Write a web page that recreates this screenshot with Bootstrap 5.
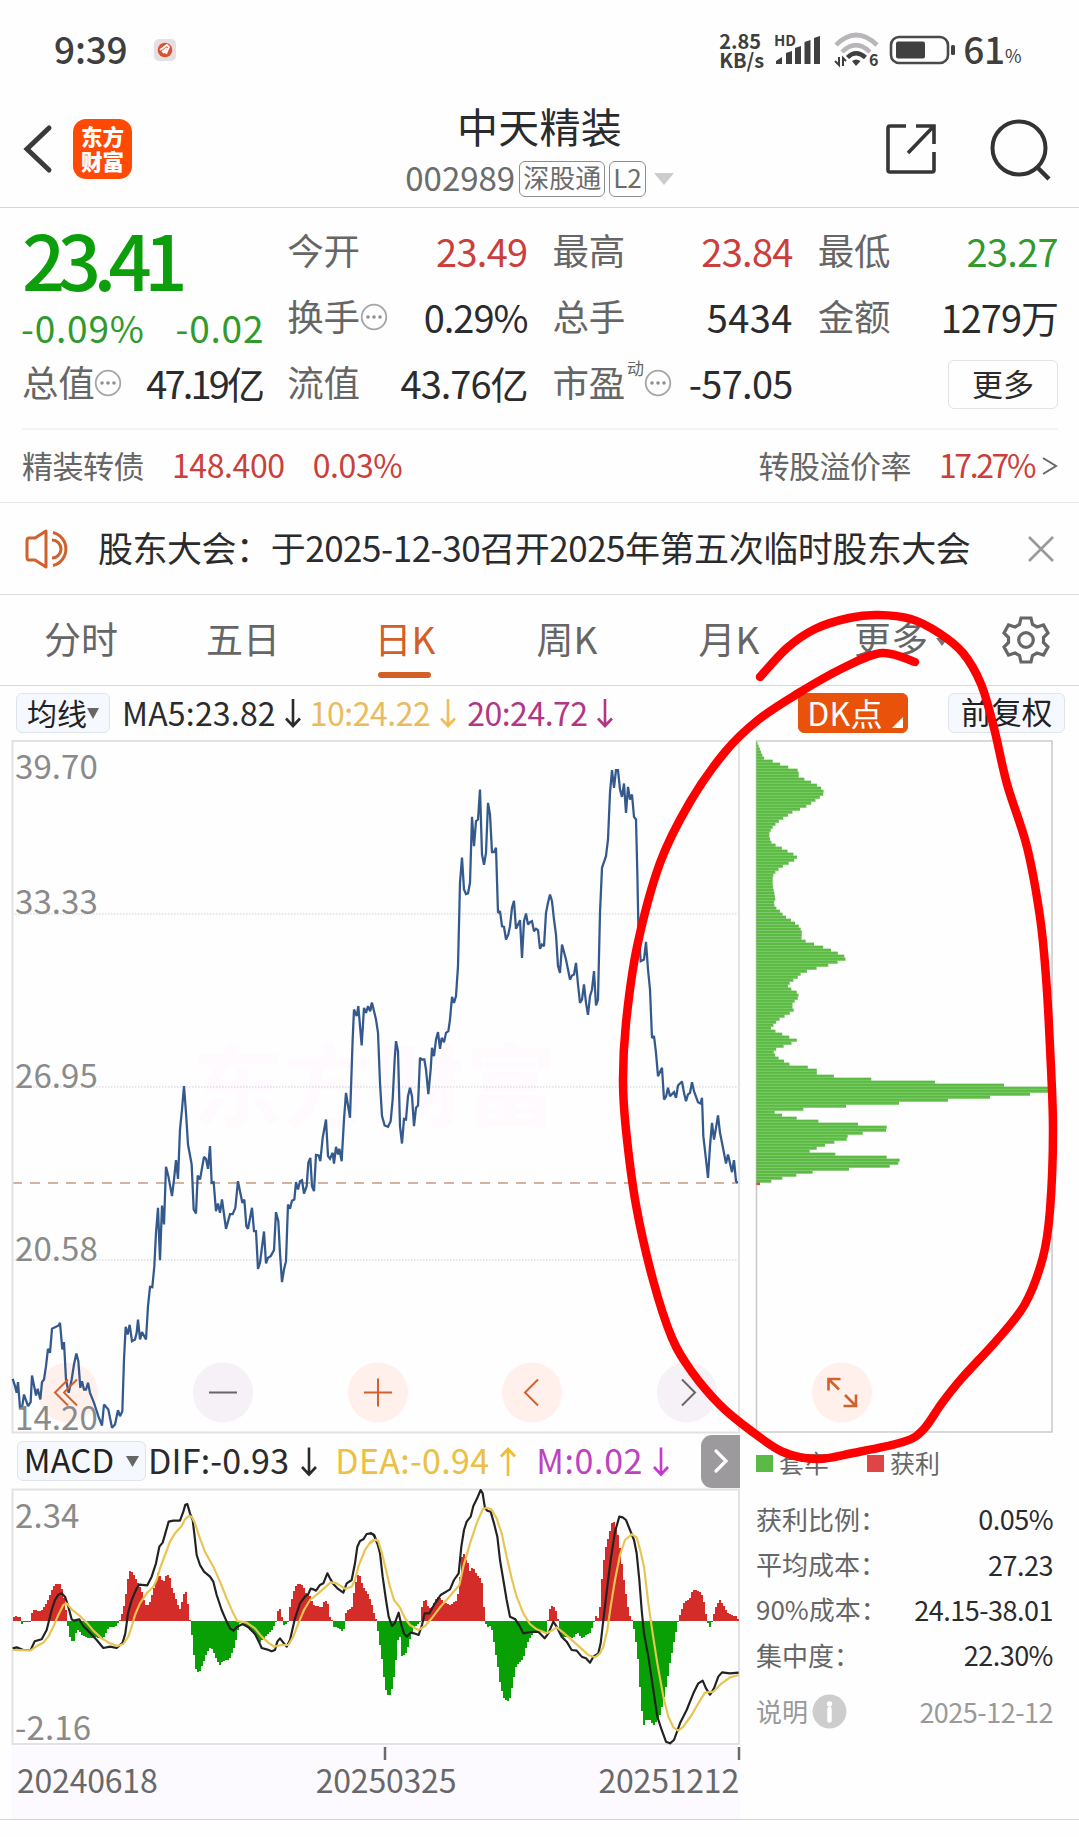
<!DOCTYPE html>
<html lang="zh-CN">
<head>
<meta charset="utf-8">
<meta name="viewport" content="width=device-width, initial-scale=1">
<title>中天精装 002989</title>
<link href="https://cdn.jsdelivr.net/npm/bootstrap@5.3.0/dist/css/bootstrap.min.css" rel="stylesheet">
<style>
body{font-family:"Noto Sans CJK SC",sans-serif;background:#fefefe;color:#2b2b2d;width:1079px;height:1837px;overflow:hidden;position:relative;line-height:1}
svg{display:block;flex:none;overflow:visible}
.statusbar{height:100px;padding:0 57px 0 54px;color:#3f3f3f}
.clock{font-size:37px;font-weight:500;letter-spacing:-.2px;padding-bottom:4px}
.appdot{margin-left:26px}
.netspeed{font-size:20px;font-weight:700;line-height:19px;width:55px;letter-spacing:0}
.wifi{margin-left:7px}
.battery{margin-left:4px}
.percent{font-size:18px;padding-top:9px;width:17px}
.titlebar{height:108px;border-bottom:1px solid #d3d6d6}
.backicon{margin:0 0 10px 23px}
.applogo{width:59px;height:60px;border-radius:13px;background:#ff4a05;color:#fff;font-size:21.5px;line-height:25px;font-weight:900;padding-top:4px;margin:0 0 9px 20px}
.shareicon{margin:0 69px 9px 0}
.searchicon{margin:0 27px 8px -16px}
.stockname{font-size:41px;line-height:44px;padding-top:3px;letter-spacing:.3px}
.stockcode{font-size:33px;color:#6c6c6c;height:38px;margin-top:13px}
.tagbox{border:1.5px solid #8d8d8d;border-radius:6px;height:36px;padding:0 3px 4px;font-size:26px;display:flex;align-items:center;margin-left:4px}
.quotes{padding:12px 21px 9px 22px;gap:25px;height:220px}
.qcol{flex:1 1 0;min-width:0}
.qrow{height:66px;font-size:38px;letter-spacing:-1px;padding-bottom:5px}
.qlabel{font-size:36.5px;letter-spacing:-.3px;color:#666;display:flex;align-items:center}
.tight{letter-spacing:-2.8px}
.loose{letter-spacing:.4px}
.price{letter-spacing:-.7px}
.bigprice{height:86px;font-size:76px;line-height:77px;font-weight:500;letter-spacing:-7.6px;color:#0d9f0b;padding-bottom:9px}
.chg{height:46px;font-size:37px;letter-spacing:.8px;padding-bottom:3px;margin:0 -2px 0 -1px}
.up{color:#cb3f3b}.down{color:#319a2c}
.dyn{font-size:17px;margin:-30px 0 0 2px}
.morebtn{width:110px;height:49px;border:1.5px solid #e3e3e3;border-radius:6px;font-size:31px;letter-spacing:0;padding-bottom:4px;margin-top:4px}
.bondrow{margin:0 21px 0 22px;height:74px;border-top:2px solid #f4f4f4;font-size:32px;letter-spacing:-.4px;padding-bottom:4px}
.bondlabel{font-size:31px;letter-spacing:-.5px;color:#666}
.bondrate{letter-spacing:-2.4px}
.noticebar{height:93px;border-top:1.5px solid #e9e9e9;border-bottom:1.5px solid #dcdcdc;padding:0 25px}
.noticetext{font-size:35px;letter-spacing:-.47px;margin-left:27px;padding-bottom:4px;white-space:nowrap}
.tabs{height:91px;border-bottom:1.5px solid #d8d8d8;color:#666;font-size:37px}
.tabitem{width:162px;position:relative;padding-bottom:3px}
.tabitem.current{color:#d25f26}
.tabitem.current::after{content:"";position:absolute;left:54px;bottom:7px;width:53px;height:6px;border-radius:3px;background:#d25f26}
.morecaret{left:126px;top:43px}
.indic{height:54px;font-size:32px}
.pill{height:40px;border:1.5px solid #e0e4ea;border-radius:6px;background:#f5f9ff;color:#222;display:flex;align-items:center;justify-content:center;white-space:nowrap}
.glyphs{padding-bottom:3px;white-space:nowrap}
.dkbtn{width:110px;background:#e9520b;border-color:#e9520b;color:#fff;font-size:32px;letter-spacing:.2px;position:relative}
.dkmark{right:4px;bottom:4px}
.ma10{color:#eabb5d;margin-left:9px;letter-spacing:-.5px}
.ma20{color:#b23684;margin-left:11px;letter-spacing:-.5px}
.leftpane{width:740px}
.macdrow{height:55px;font-size:34px;padding-bottom:1px}
.nextbtn{width:39px;height:53px;background:#9c9a9d;border-radius:11px 0 0 11px}
.datestrip{margin-left:12px;height:73px;background:#fdfaff;color:#686868;font-size:32px;letter-spacing:-.2px;padding:0 1px 7px 5px}
.rightpane{width:339px;padding-left:16px;padding-right:26px}
.legendrow{height:59px;font-size:25px;color:#666}
.sq{width:17px;height:17px;display:inline-block}
.costs{padding-top:3px}
.costrow{height:45.4px;font-size:27px;letter-spacing:-.5px}
.costrow span:first-child{color:#666;font-size:26px;letter-spacing:0}
.costrow.explain,.costrow.explain span:first-child{color:#999}
.explain{margin-top:11px}
.marker{position:absolute;left:0;top:0;pointer-events:none}
.axis{font-size:33px;fill:#8a8a8a;letter-spacing:.1px}
.endline{border-top:1.5px solid #d0d4dc;height:17px}
</style>
</head>
<body>
<svg width="0" height="0" class="position-absolute">
  <defs>
    <symbol id="dots" viewBox="0 0 28 28"><circle cx="14" cy="14" r="12.3" fill="none" stroke="#a5a5a5" stroke-width="1.8"/><g fill="#8f8f8f"><circle cx="8" cy="14" r="1.8"/><circle cx="14" cy="14" r="1.8"/><circle cx="20" cy="14" r="1.8"/></g></symbol>
    <symbol id="arrow" viewBox="0 0 16 30"><path d="M8 1V28M1 20.500L8 28L15 20.500" fill="none" stroke="currentColor" stroke-width="2.600"/></symbol>
  </defs>
</svg>

<header>
  <div class="statusbar d-flex align-items-center">
    <span class="clock">9:39</span>
    <svg class="appdot" width="22" height="22" viewBox="0 0 22 22"><rect width="22" height="22" rx="5" fill="#e6dfe2"/><circle cx="11" cy="11" r="7.300" fill="#dc5230"/><path d="M6 11L13 6L15 8L12 15M8 13L13 9M9 14L14 11" stroke="#fff" stroke-width="1.800" fill="none"/></svg>
    <div class="d-flex align-items-center ms-auto">
      <div class="netspeed">2.85<br>KB/s</div>
      <svg width="50" height="34" viewBox="0 0 50 34"><text x="0" y="13" font-size="15" font-weight="700" fill="#3f3f3f" textLength="22">HD</text><g fill="#3f3f3f"><path d="M2 31V28L8 24V31Z"/><path d="M12 31V20L18 18V31Z"/><path d="M21 31V15L27 13V31Z"/><path d="M30.500 31V9L36.500 7V31Z"/><path d="M40 31V5L46 3V31Z"/></g></svg>
      <svg class="wifi" width="54" height="36" viewBox="0 0 54 36"><g fill="none" stroke-width="4.500"><path d="M5 13Q25-7 46 13" stroke="#b8b6b8"/><path d="M11 20Q25 6 39 20" stroke="#b8b6b8"/><path d="M16.500 25.500Q25 17 34.500 25.500" stroke="#3f3f3f"/></g><path d="M21 29Q25 26 29.500 29L25 34Z" fill="#3f3f3f"/><path d="M8 25V33L4 29M12 34V26L15 29" stroke="#3f3f3f" stroke-width="2" fill="none"/><text x="38" y="34" font-size="16" font-weight="700" fill="#3f3f3f">6</text></svg>
      <svg class="battery" width="66" height="30" viewBox="0 0 66 30"><rect x="2" y="2" width="57" height="26" rx="8" fill="none" stroke="#4a4a4a" stroke-width="2.600"/><rect x="7" y="6.500" width="29" height="17" rx="2" fill="#404040"/><rect x="62" y="10" width="4" height="10" rx="1.500" fill="#404040"/></svg>
      <span class="clock ms-2">61</span><span class="percent">%</span>
    </div>
  </div>
  <div class="titlebar d-flex align-items-center position-relative">
    <svg class="backicon" width="30" height="50" viewBox="0 0 30 50"><path d="M26 4L4 25L26 46" fill="none" stroke="#3a3a3b" stroke-width="5" stroke-linecap="round"/></svg>
    <div class="applogo text-center">东方<br>财富</div>
    <div class="position-absolute start-0 end-0 top-0 d-flex flex-column align-items-center">
      <div class="stockname">中天精装</div>
      <div class="stockcode d-flex align-items-center"><span class="glyphs">002989</span><span class="tagbox">深股通</span><span class="tagbox">L2</span><svg class="ms-2" width="20" height="12" viewBox="0 0 20 12"><path d="M0 0H20L10 12Z" fill="#ccc"/></svg></div>
    </div>
    <svg class="shareicon ms-auto" width="52" height="52" viewBox="0 0 52 52"><path d="M21 3H5Q3 3 3 5V47Q3 49 5 49H47Q49 49 49 47V29M31 3H49V21M48 4L23 30" fill="none" stroke="#363636" stroke-width="3.600"/></svg>
    <svg class="searchicon" width="62" height="62" viewBox="0 0 62 62"><circle cx="29" cy="29" r="26.500" fill="none" stroke="#333" stroke-width="4"/><path d="M47 48L59 60" stroke="#333" stroke-width="4.500"/></svg>
  </div>
</header>

<section class="quotes d-flex">
  <div class="qcol">
    <div class="bigprice">23.41</div>
    <div class="chg down d-flex align-items-center justify-content-between"><span>-0.09%</span><span>-0.02</span></div>
    <div class="qrow d-flex align-items-center justify-content-between"><span class="qlabel">总值<svg width="28" height="28"><use href="#dots"/></svg></span><span class="tight">47.19亿</span></div>
  </div>
  <div class="qcol">
    <div class="qrow d-flex align-items-center justify-content-between"><span class="qlabel">今开</span><span class="up price">23.49</span></div>
    <div class="qrow d-flex align-items-center justify-content-between"><span class="qlabel">换手<svg width="28" height="28"><use href="#dots"/></svg></span><span>0.29%</span></div>
    <div class="qrow d-flex align-items-center justify-content-between"><span class="qlabel">流值</span><span>43.76亿</span></div>
  </div>
  <div class="qcol">
    <div class="qrow d-flex align-items-center justify-content-between"><span class="qlabel">最高</span><span class="up price">23.84</span></div>
    <div class="qrow d-flex align-items-center justify-content-between"><span class="qlabel">总手</span><span class="loose">5434</span></div>
    <div class="qrow d-flex align-items-center justify-content-between"><span class="qlabel">市盈<span class="dyn">动</span><svg width="28" height="28"><use href="#dots"/></svg></span><span class="price">-57.05</span></div>
  </div>
  <div class="qcol">
    <div class="qrow d-flex align-items-center justify-content-between"><span class="qlabel">最低</span><span class="down price">23.27</span></div>
    <div class="qrow d-flex align-items-center justify-content-between"><span class="qlabel">金额</span><span>1279万</span></div>
    <div class="qrow d-flex align-items-center justify-content-end"><span class="morebtn d-flex align-items-center justify-content-center">更多</span></div>
  </div>
</section>

<section class="bondrow d-flex align-items-center">
  <span class="bondlabel">精装转债</span><span class="up ms-4 ps-1">148.400</span><span class="up ms-4 ps-1">0.03%</span>
  <span class="bondlabel ms-auto">转股溢价率</span><span class="up ms-4 ps-1 bondrate">17.27%</span>
  <svg class="ms-2 mt-1" width="16" height="20" viewBox="0 0 16 20"><path d="M1 2L14 10L1 18" fill="none" stroke="#666" stroke-width="2"/></svg>
</section>

<section class="noticebar d-flex align-items-center">
  <svg width="46" height="42" viewBox="0 0 46 42"><g fill="none" stroke="#d0602c" stroke-width="3"><path d="M21 3V39L10 32H4Q2 32 2 29V13Q2 10 4 10H10Z" stroke-linejoin="round"/><path d="M27 12A9 9 0 0 1 27 30M28 4.500A17 17 0 0 1 28 37.500"/></g></svg>
  <span class="noticetext">股东大会：于2025-12-30召开2025年第五次临时股东大会</span>
  <svg class="ms-auto" width="26" height="26" viewBox="0 0 26 26"><path d="M1 1L25 25M25 1L1 25" stroke="#999" stroke-width="2.600"/></svg>
</section>

<nav class="tabs d-flex">
  <div class="tabitem d-flex align-items-center justify-content-center">分时</div>
  <div class="tabitem d-flex align-items-center justify-content-center">五日</div>
  <div class="tabitem current d-flex align-items-center justify-content-center">日K</div>
  <div class="tabitem d-flex align-items-center justify-content-center">周K</div>
  <div class="tabitem d-flex align-items-center justify-content-center">月K</div>
  <div class="tabitem d-flex align-items-center justify-content-center">更多<svg class="morecaret position-absolute" width="12" height="10" viewBox="0 0 12 10"><path d="M0 0H12L6 8Z" fill="#777"/></svg></div>
  <div class="flex-fill d-flex align-items-center justify-content-center"><svg width="48" height="48" viewBox="-24 -24 48 48"><path fill="none" stroke="#666" stroke-width="3.200" d="M-5-22H5L6.500-15.500L11-13L17.500-15L22-7L17.500-2.500V2.500L22 7L17.500 15L11 13L6.500 15.500L5 22H-5L-6.500 15.500L-11 13L-17.500 15L-22 7L-17.500 2.500V-2.500L-22-7L-17.500-15L-11-13L-6.500-15.500Z"/><circle r="7.300" fill="none" stroke="#666" stroke-width="3.200"/></svg></div>
</nav>

<section class="indic d-flex align-items-center">
  <div class="pill" style="width:94px;margin-left:16px;font-size:30px"><span class="glyphs">均线</span><svg width="12" height="11" viewBox="0 0 12 11"><path d="M0 0H12L6 11Z" fill="#666"/></svg></div>
  <span class="glyphs" style="margin-left:12px;letter-spacing:.2px">MA5:23.82</span><svg width="16" height="30" style="margin-left:9px"><use href="#arrow"/></svg>
  <span class="glyphs ma10">10:24.22</span><svg width="16" height="30" style="color:#f2bd54;margin-left:10px"><use href="#arrow"/></svg>
  <span class="glyphs ma20">20:24.72</span><svg width="16" height="30" style="color:#b23684;margin-left:9px"><use href="#arrow"/></svg>
  <div class="pill dkbtn ms-auto"><span class="glyphs me-3">DK点</span><svg class="dkmark position-absolute" width="11" height="11" viewBox="0 0 11 11"><path d="M11 0V11H0Z" fill="#fff"/></svg></div>
  <div class="pill" style="width:117px;margin:0 14px 0 40px;font-size:30.500px"><span class="glyphs">前复权</span></div>
</section>

<main class="d-flex">
  <div class="leftpane">
    <svg width="740" height="694" viewBox="0 740.500 740 694">
      <text x="192" y="1120" font-size="91" font-weight="700" fill="#fefafe" font-family="Noto Sans CJK SC">东方财富</text>
      <g stroke="#d0cdd2" stroke-width="1" stroke-dasharray="1.500 1.500"><path d="M12 914.500H740M12 1087.500H740M12 1260.500H740"/></g>
      <path d="M12 1183.500H738" stroke="#c59b7b" stroke-width="1.300" stroke-dasharray="10 8"/>
      <path d="M12.500 741.500H739V1433H12.500Z" fill="none" stroke="#e2e2e2" stroke-width="2"/>
      <g fill="#fff0ec"><circle cx="68" cy="1393" r="30"/><circle cx="378" cy="1393" r="30"/><circle cx="532" cy="1393" r="30"/></g>
      <g fill="#f5f1f6"><circle cx="223" cy="1393" r="30"/><circle cx="687" cy="1393" r="30"/></g>
      <g fill="none" stroke="#34598d" stroke-width="6.800" stroke-linejoin="miter" stroke-miterlimit="2">
        <polyline transform="translate(0 1040) scale(.33333)" points="38,1018 45,1040 50,1060 54,1028 60,1105 66,1105 72,1065 84,1100 92,1088 96,1008 108,1068 113,1048 121,1080 126,1028 132,1020 138,980 144,928 150,940 156,868 176,858 180,850 187,930 192,908 198,1020 206,1060 215,1020 222,975 229,942 235,965 241,1045 246,1025 252,1050 258,1050 264,1030 270,1060 282,1090 295,1130 306,1158 312,1095 325,1110 336,1165 345,1155 354,1112 360,1130 367,1115 372,960 377,862 383,885 389,856 396,905 405,900 410,880 414,840 420,900 426,878 438,900 444,800 450,742 457,743 463,680 468,580 474,505 480,662 486,498 492,555 498,382 505,410 516,470 522,420 528,362 534,418 540,270 546,210 552,140 558,220 564,315 575,375 581,510 588,522 593,408 600,420 612,352 618,358 624,388 630,320 635,430 641,428 648,515 654,492 660,520 666,480 678,568 690,524 698,524 706,505 714,425 720,455 727,490 733,480 739,560 744,568 756,505 762,575 768,575 774,688 780,670 792,576 798,672 804,655 812,650 822,632 828,518 835,545 840,640 846,728 852,690 858,665 864,495 870,508 876,484 883,480 888,428 894,450 900,425 906,422 912,462 920,440 925,370 931,355 936,440 942,455 948,346 956,348 961,365 968,295 978,240 984,350 990,358 998,340 1002,372 1008,322 1014,345 1018,328 1025,365 1032,240 1038,160 1050,235 1058,0 1062,-90 1070,-70 1075,-100 1085,18 1092,-95 1098,-80 1104,-100 1110,-85 1116,-110"/>
        <polyline transform="translate(370 740) scale(.33333)" points="0,815 6,790 18,840 24,880 30,1030 36,1130 44,1158 54,1162 62,1145 68,1080 74,960 78,905 84,935 90,1160 96,1212 102,1138 108,1140 114,1070 120,1045 126,1070 132,1160 138,1105 144,1098 150,955 156,960 163,960 168,990 175,1064 182,990 186,925 192,950 198,900 204,878 210,928 215,895 222,908 228,880 235,875 240,840 246,772 252,790 258,770 264,680 270,430 276,354 282,450 288,464 294,462 300,430 306,232 312,320 318,245 324,240 330,150 336,345 342,376 348,340 354,190 360,225 366,338 372,338 378,325 384,520 390,515 396,560 402,562 408,600 415,585 420,560 426,505 432,484 438,568 444,555 450,542 456,655 462,545 468,522 474,555 480,548 486,545 492,575 498,568 504,572 510,628 516,615 522,620 528,520 534,490 540,465 546,485 552,540 558,585 564,680 570,700 576,615 588,660 600,720 606,708 612,705 618,670 624,735 630,790 636,780 642,735 648,790 654,826 660,770 666,750 672,695 678,798 684,780 690,520 696,385 708,350 714,300 720,160 726,92 732,145 738,92 744,92 750,150 756,172 762,132 768,220 774,142 780,180 786,165 792,232 798,240 802,400 805,555 812,665 822,660 828,607 834,690 840,750 846,895 852,890 858,940 864,1010 876,985 882,1080 888,1072 894,1045 900,1070 912,1058 918,1075 924,1038 936,1026 942,1060 948,1085 954,1065 960,1060 966,1028 972,1055 984,1088 992,1092 996,1075 1000,1190 1008,1260 1014,1315 1020,1220 1026,1150 1032,1200 1038,1165 1044,1128 1050,1180 1056,1210 1068,1272 1074,1245 1086,1298 1092,1262 1098,1325 1103,1330"/>
      </g>
      <g fill="none" stroke="#d0622f" stroke-width="2"><path d="M68 1380L55 1393L68 1406M77 1380L64 1393L77 1406"/><path d="M364 1393H392M378 1379V1407"/><path d="M538 1380L525 1393L538 1406"/></g>
      <g fill="none" stroke="#666" stroke-width="2"><path d="M209 1393H237M682 1380L695 1393L682 1406"/></g>
      <g class="axis"><text x="15" y="779">39.70</text><text x="15" y="914">33.33</text><text x="15" y="1088">26.95</text><text x="15" y="1261">20.58</text><text x="15" y="1430">14.20</text></g>
    </svg>
    <div class="macdrow d-flex align-items-center">
      <div class="pill" style="width:129px;margin-left:17px;font-size:33px"><span class="glyphs">MACD</span><svg width="13" height="11" viewBox="0 0 13 11" style="margin-left:12px"><path d="M0 0H13L6.500 11Z" fill="#666"/></svg></div>
      <span class="glyphs" style="margin-left:2px;letter-spacing:.2px">DIF:-0.93</span><svg width="16" height="31" style="margin-left:12px"><use href="#arrow"/></svg>
      <span class="glyphs" style="color:#ebc044;margin-left:18px;letter-spacing:.3px">DEA:-0.94</span><svg width="16" height="31" viewBox="0 0 16 31" style="margin-left:11px"><path d="M8 30V3M1 10.500L8 3L15 10.500" fill="none" stroke="#f2bd33" stroke-width="2.600"/></svg>
      <span class="glyphs" style="color:#bd42c0;margin-left:20px;letter-spacing:.6px">M:0.02</span><svg width="16" height="31" style="color:#c835d0;margin-left:10px"><use href="#arrow"/></svg>
      <div class="nextbtn ms-auto d-flex align-items-center justify-content-center"><svg width="14" height="24" viewBox="0 0 14 24"><path d="M2 2L12 12L2 22" fill="none" stroke="#fff" stroke-width="3.200" stroke-linecap="round"/></svg></div>
    </div>
    <svg width="740" height="257" viewBox="0 1489 740 257">
      <path d="M12.500 1489.500H739V1744H12.500Z" fill="none" stroke="#e2e2e2" stroke-width="2"/>
      <g id="macdbars" transform="translate(0 1420) scale(.33333)" shape-rendering="crispEdges"></g>
      <g fill="none" stroke="#222" stroke-width="6.500" stroke-linejoin="round">
        <polyline transform="translate(0 1420) scale(.33333)" points="38,685 50,682 70,690 92,690 104,664 125,658 140,630 155,570 165,540 175,524 185,520 195,530 205,560 215,598 222,602 238,598 250,618 270,638 290,660 310,684 330,680 350,684 368,668 376,640 384,580 395,540 410,505 418,494 442,496 455,470 468,430 478,380 488,368 496,340 506,305 520,302 540,302 550,275 556,254 562,252 570,280 578,300 584,350 590,405 600,435 612,455 630,470 640,485 650,525 665,570 680,605 690,625 700,632 712,620 728,612 745,622 765,642 778,668 785,684 800,688 815,694 825,690 832,665 840,655 850,668 860,680 870,660 885,595 900,550 915,530 925,522 932,506 940,508 948,512 960,495 970,490 982,460 990,475 1000,492 1012,505 1030,518 1040,490 1055,480 1065,430 1072,380 1080,363 1090,358 1100,342 1112,340 1122,345 1132,370"/>
        <polyline transform="translate(370 1420) scale(.33333)" points="0,338 12,345 22,370 30,400 38,470 48,540 56,590 66,618 74,610 86,578 94,615 102,640 110,650 122,638 132,640 146,645 156,615 164,580 178,580 195,550 212,525 240,508 252,480 266,460 274,380 282,330 290,305 302,290 310,258 320,238 332,210 338,220 345,265 352,272 362,275 372,310 382,350 390,420 400,480 410,540 420,590 436,598 450,620 460,640 480,636 505,635 524,655 535,640 550,605 560,620 575,650 590,665 605,690 620,692 635,710 648,715 660,728 670,710 685,700 692,670 700,600 712,500 722,420 735,335 748,290 758,292 768,300 780,330 792,360 800,400 808,480 815,570 822,640 835,710 850,810 862,890 875,930 888,965 900,970 912,960 930,910 950,870 970,820 985,790 998,782 1008,805 1020,824 1032,805 1045,770 1056,757 1080,760 1106,758"/>
      </g>
      <g fill="none" stroke="#e8c451" stroke-width="6.500" stroke-linejoin="round">
        <polyline transform="translate(0 1420) scale(.33333)" points="38,690 92,691 110,678 130,668 145,650 160,620 175,585 190,555 200,550 215,568 240,588 260,608 280,632 305,655 330,670 352,678 370,672 385,650 395,620 405,585 420,550 440,520 460,500 470,480 480,445 495,405 510,365 525,340 545,318 555,298 566,288 575,290 585,310 598,350 615,395 640,440 660,485 680,535 700,580 712,603 740,608 765,625 785,650 805,668 822,680 845,675 865,675 880,650 895,610 912,570 930,540 955,520 980,498 992,487 1010,490 1035,506 1055,500 1065,480 1075,440 1095,390 1112,365 1130,358"/>
        <polyline transform="translate(370 1420) scale(.33333)" points="0,372 10,360 24,362 36,400 48,450 60,500 72,540 90,563 105,595 120,615 145,630 165,618 185,595 210,562 240,528 268,495 280,440 300,370 320,310 338,268 350,263 364,268 380,295 395,340 410,410 425,475 440,530 460,580 480,612 500,628 530,640 545,632 560,622 580,638 600,655 630,682 655,705 675,712 690,700 700,680 712,630 722,560 735,480 750,405 765,360 785,343 800,352 812,395 822,440 835,550 848,640 862,730 880,830 895,890 910,922 925,932 940,920 965,885 985,850 1005,818 1030,815 1055,790 1080,772 1106,765"/>
      </g>
      <g class="axis"><text x="15" y="1528">2.34</text><text x="15" y="1740">-2.16</text></g>
    </svg>
    <div class="datestrip d-flex align-items-center justify-content-between position-relative">
      <svg class="position-absolute top-0 start-0" width="728" height="16"><path d="M373 1V14M727 1V14" stroke="#6b6b6b" stroke-width="2.500"/></svg>
      <span>20240618</span><span class="ms-3">20250325</span><span>20251212</span>
    </div>
  </div>
  <div class="rightpane">
    <svg width="297" height="694" viewBox="756 740.500 297 694">
      <path d="M756.500 741.500H1052V1432.500H756.500Z" fill="none" stroke="#cbcbcb" stroke-width="1.600"/>
      <g id="chips" transform="translate(740 730) scale(.33333)"></g>
      <circle cx="842" cy="1393" r="30" fill="#fff0ec"/>
      <path d="M828.500 1391V1379.500H840.500M829 1380L839 1390M856 1395V1406.500H843.500M855.500 1406L845 1395.500" fill="none" stroke="#d0622f" stroke-width="2.600"/>
    </svg>
    <div class="legendrow d-flex align-items-center"><i class="sq" style="background:#5bb946"></i><span class="glyphs" style="margin-left:6px">套牢</span><i class="sq" style="background:#e04545;margin-left:38px"></i><span class="glyphs" style="margin-left:6px">获利</span></div>
    <div class="costs">
      <div class="costrow d-flex align-items-center justify-content-between"><span>获利比例：</span><span>0.05%</span></div>
      <div class="costrow d-flex align-items-center justify-content-between"><span>平均成本：</span><span>27.23</span></div>
      <div class="costrow d-flex align-items-center justify-content-between"><span>90%成本：</span><span>24.15-38.01</span></div>
      <div class="costrow d-flex align-items-center justify-content-between"><span>集中度：</span><span>22.30%</span></div>
      <div class="costrow explain d-flex align-items-center"><span>说明</span><svg width="35" height="35" viewBox="0 0 35 35" style="margin-left:4px"><circle cx="17.500" cy="17.500" r="17" fill="#cdcdcd"/><circle cx="17.500" cy="10" r="2.700" fill="#fff"/><path d="M17.500 15V26.500" stroke="#fff" stroke-width="4.500" stroke-linecap="round"/></svg><span class="ms-auto">2025-12-12</span></div>
    </div>
  </div>
</main>
<footer class="endline"></footer>

<svg class="marker" width="1079" height="1837"><path id="loop" fill="none" stroke="#f00" stroke-width="8.500" stroke-linecap="round" stroke-linejoin="round"/></svg>

<script>
const NS = 'http://www.w3.org/2000/svg';
function bar(parent, x, y, w, h, fill) {
  const r = document.createElementNS(NS, 'rect');
  for (const [k, v] of Object.entries({x, y, width: w, height: h, fill})) r.setAttribute(k, v);
  parent.appendChild(r);
}
function pairs(text) { return text.trim().split(/\s+/).map(p => p.split(',').map(Number)); }
function sample(points, t) {
  for (let i = 1; i < points.length; i++) {
    const [a, va] = points[i - 1], [b, vb] = points[i];
    if (t <= b) return va + (vb - va) * Math.max(0, t - a) / (b - a);
  }
  return points[points.length - 1][1];
}

// Cost distribution: level, bar end
const chips = pairs(`36,50 60,60 80,68 90,75 95,98 105,123 115,150 123,176 140,176 150,195 160,218 170,236 180,248 188,252 198,248 205,236 215,222 225,208 235,190 243,170 250,152 260,140 270,123 280,110 295,96 310,88 325,88 340,95 350,112 358,130 368,148 377,166 385,173 395,158 405,138 413,123 425,108 440,98 470,98 490,103 512,106 522,100 535,108 547,122 557,130 566,142 575,158 585,170 593,180 610,186 625,184 632,188 638,206 647,230 655,256 664,278 673,298 682,317 692,316 700,285 710,256 718,221 727,195 736,178 745,172 755,155 768,142 780,155 790,174 800,176 808,172 820,158 830,156 842,161 852,148 862,130 870,117 880,106 897,92 906,108 915,129 924,150 933,173 942,152 951,128 960,106 970,100 980,108 987,117 996,134 1005,150 1014,210 1023,233 1032,230 1041,288 1050,407 1058,585 1067,792 1076,925 1085,925 1094,870 1103,750 1112,624 1121,477 1130,318 1139,190 1148,104 1157,126 1166,170 1175,235 1184,354 1193,440 1202,438 1211,368 1220,323 1229,320 1238,283 1247,255 1256,230 1265,209 1274,286 1283,440 1292,479 1301,475 1310,449 1319,327 1328,218 1337,169 1346,127 1355,94`);
const chipBox = document.getElementById('chips');
for (let y = 41; y <= 1356; y += 9) {
  const w = sample(chips, y) - 49;
  bar(chipBox, 49, y - 4.5, w, 9, '#5bb944');
  if (y < 480 || (y > 645 && y < 1270)) bar(chipBox, 49, y + 2, w, 2.5, '#7fd76b');
}
bar(chipBox, 49, 1359, 11, 8, '#c05a3c');

// MACD histogram: position, bar end; the zero line is 603
const hist = pairs(`38,592 48,588 55,592 60,592 62,603 66,612 72,606 88,604 94,603 96,580 104,568 112,574 124,574 132,562 142,545 150,525 158,505 165,492 182,492 186,508 192,535 198,570 202,600 205,628 212,662 222,662 228,640 235,628 245,645 256,652 270,655 285,650 308,658 318,640 326,622 340,620 352,618 355,604 362,598 368,575 376,540 382,485 390,452 400,460 412,485 420,500 428,520 434,548 440,560 450,545 458,520 466,490 476,452 482,475 490,488 498,468 508,465 515,500 522,520 532,550 540,568 548,540 554,512 560,520 565,560 570,600 572,603 577,655 583,715 590,760 600,752 608,735 618,705 632,680 640,695 650,718 660,735 670,722 688,720 696,700 704,680 712,640 718,612 726,606 740,618 755,635 770,650 780,665 790,655 800,645 815,632 824,615 828,603 830,585 838,560 846,590 848,604 852,615 862,612 865,600 866,580 874,545 884,505 892,492 908,495 920,525 934,530 938,555 950,558 965,562 972,545 982,540 990,590 996,600 1002,620 1016,625 1030,636 1036,610 1038,580 1045,570 1058,560 1062,520 1070,475 1077,455 1084,485 1090,500 1105,525 1115,550 1125,590 1130,603 1136,650 1144,700 1152,770 1160,825 1172,825 1180,790 1188,720 1194,660 1200,650 1206,708 1216,705 1224,680 1232,650 1240,625 1255,612 1260,604 1262,578 1270,545 1278,540 1286,565 1296,560 1306,540 1316,528 1330,545 1350,555 1372,540 1380,470 1388,392 1396,415 1404,430 1412,460 1418,436 1425,455 1435,470 1445,478 1450,540 1456,600 1460,625 1468,615 1476,630 1484,680 1494,740 1502,800 1512,835 1522,845 1532,830 1540,780 1548,740 1560,725 1570,715 1578,685 1586,660 1600,640 1620,635 1640,635 1643,603 1646,590 1650,568 1658,555 1666,565 1672,590 1676,603 1682,650 1700,650 1720,655 1732,635 1745,655 1758,645 1770,640 1778,620 1782,603 1786,588 1798,595 1802,530 1808,450 1816,390 1826,350 1832,325 1839,298 1848,320 1856,355 1862,400 1868,450 1876,510 1884,560 1892,598 1898,603 1904,640 1912,690 1918,770 1924,860 1932,915 1938,900 1952,900 1960,918 1968,905 1976,900 1984,870 1994,820 2002,780 2010,730 2018,690 2026,645 2034,604 2042,580 2050,552 2060,542 2070,535 2078,508 2095,512 2110,528 2115,570 2122,600 2124,608 2130,622 2136,604 2140,590 2150,555 2160,540 2170,555 2180,575 2195,585 2210,590 2216,600`);
const histBox = document.getElementById('macdbars');
for (let x = 39; x < 2214; x += 6) {
  const v = sample(hist, x + 3);
  if (v < 603) bar(histBox, x, v, 6, 603 - v, '#d32c29');
  else bar(histBox, x, 603, 6, Math.max(v - 603, 2), '#08a004');
}

// Hand-drawn loop, smoothed through its points
const pts = pairs(`760,677 787,648 815,629 849,618 878,615 911,619 939,633 963,653 981,684 994,728 1007,784 1027,847 1040,917 1046,977 1050,1047 1053,1130 1050,1210 1043,1257 1025,1304 997,1340 962,1378 942,1403 923,1430 903,1442 853,1453 817,1459 783,1452 750,1430 720,1405 692,1372 672,1338 653,1280 636,1205 626,1130 623,1080 626,1023 637,947 660,863 690,802 725,752 758,720 797,694 843,668 882,653 915,662`);
let d = 'M' + pts[0];
for (let i = 0; i < pts.length - 1; i++) {
  const a = pts[Math.max(i - 1, 0)], b = pts[i], c = pts[i + 1], e = pts[Math.min(i + 2, pts.length - 1)];
  d += ` C${b[0] + (c[0] - a[0]) / 6},${b[1] + (c[1] - a[1]) / 6} ${c[0] - (e[0] - b[0]) / 6},${c[1] - (e[1] - b[1]) / 6} ${c[0]},${c[1]}`;
}
document.getElementById('loop').setAttribute('d', d);
</script>
<script src="https://cdn.jsdelivr.net/npm/bootstrap@5.3.0/dist/js/bootstrap.bundle.min.js"></script>
</body>
</html>
